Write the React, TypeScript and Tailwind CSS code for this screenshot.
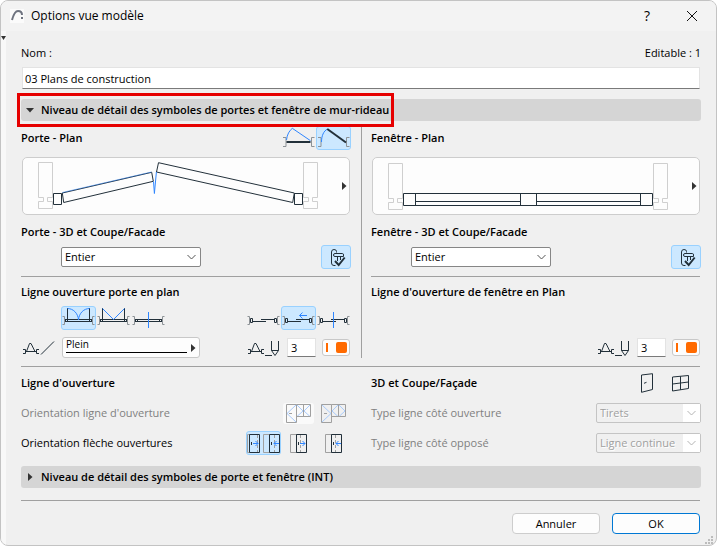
import React, { useState } from 'react';
import clsx from 'clsx';

const INK = '#22303a';
const BLUE = '#2f86ff';
const GREY = '#a0a0a0';

// ---------- drawings ----------

const Brackets = () => <path d="M.5 9.5h2v8h-2M32.5 9.5h-2v8h2" stroke="#8d9296" />;

const Icon: React.FC<{ w?: number; h?: number; children: React.ReactNode }> = ({ w = 33, h = 22, children }) => (
  <svg width={w} height={h} viewBox={`0 0 ${w} ${h}`} fill="none" stroke={INK} className="shrink-0" aria-hidden="true">
    {children}
  </svg>
);

const DoorClosed = () => (
  <Icon>
    <path d="M1 10.5h3v9H1M32.5 10.5h-3v9h3" stroke="#8d9296" />
    <path d="M4.5 13C5 7.5 7.5 3.5 10.3 1.3L28.5 13.7" stroke={BLUE} />
    <path d="M4.5 15h24" strokeWidth="2" />
  </Icon>
);

const DoorOpen = () => (
  <Icon>
    <path d="M1 10.5h3v9H1M32.5 10.5h-3v9h3" stroke="#8d9296" />
    <path d="M4.5 15C4.5 9 6.5 4 10.5 2" stroke={BLUE} />
    <path d="M10.3 2L29 15.5" strokeWidth="2" />
  </Icon>
);

const Handle = () => (
  <Icon w={28}>
    <path d="M14.5 6.5V5.5Q14.5 3.5 12 3.5T9.5 6V17Q9.5 19.5 12 19.5H13.5" />
    <path d="M13 7.5H20.5Q21.5 7.5 21.5 9V10.5H13Q11.5 10.5 11.5 9T13 7.5M15.5 10.5V15M18.5 10.5V14" />
    <path d="M13 15L16.7 19L22.7 11.5" strokeWidth="2" />
  </Icon>
);

const Rail = () => <path d="M3 12.5H30M3 14.5H30M5.5 12.5v2M27.5 12.5v2M3.5 12v3M29.5 12v3" />;

const SwingArc = () => (
  <Icon>
    <Brackets />
    <Rail />
    <path d="M5.5 1V13M27.5 1V13" />
    <path d="M5.5 1.5C11 1.5 16 6 16.5 13C17 6 22 1.5 27.5 1.5" stroke={BLUE} />
  </Icon>
);

const SwingLine = () => (
  <Icon>
    <Brackets />
    <Rail />
    <path d="M5.5 1V13M27.5 1V13" />
    <path d="M5.5 1.5L16.5 12.5L27.5 1.5" stroke={BLUE} />
  </Icon>
);

const SwingCross = () => (
  <Icon>
    <Brackets />
    <Rail />
    <path d="M16.5 5V21" stroke={BLUE} />
  </Icon>
);

const Slider: React.FC<{ mark?: string }> = ({ mark }) => (
  <Icon>
    <Brackets />
    <path d="M3.5 11.5h2v4h-2zM27.5 11.5h2v4h-2zM5.5 14.5H19M14 12.5H27.5" />
    {mark && <path d={mark} stroke={BLUE} />}
  </Icon>
);

const OpeningMark = () => (
  <path d="M0 10.5H2.5V14.5H0M2.5 12.5H13.5M16 10.5H13.5V14.5H16M3.5 12.5L6.5 4.5H8L12 12.5" />
);

const LineTypeIcon = () => (
  <Icon w={32} h={18}>
    <OpeningMark />
    <path d="M18 15.5L31 2.5" />
  </Icon>
);

const PenIcon = () => (
  <Icon w={32} h={18}>
    <OpeningMark />
    <path d="M17 16.5H24M23.5 2V11.5L27 16.5L30.5 11.5V2M23.5 11.5H30.5" />
  </Icon>
);

const SashIcon: React.FC<{ flip?: boolean }> = ({ flip }) => (
  <Icon w={25} h={19}>
    <path
      d={
        flip
          ? 'M1 1L10 9.5L1 18M17 1L11 7L17 12.5M18 1L24 7L18 12.5'
          : 'M10 1L1 9.5L10 18M11 1L17 7L11 12.5M24 1L18 7L24 12.5'
      }
      stroke="#a9cbfb"
    />
    <path d="M.5.5h10v18H.5zM10.5.5h14v12h-14M17.5.5v12M3 9.5h3" stroke={GREY} />
  </Icon>
);

const Leaf: React.FC<{ x: number; left?: boolean; dash: number }> = ({ x, left, dash }) => (
  <g transform={`translate(${x} 0)`}>
    <path d={`M${dash}.5 1V18`} stroke={GREY} strokeDasharray="3 2" />
    <path d="M.5.5h10v18H.5z" />
    <path d="M2.5 8v3" />
    <path d={left ? 'M10 9.5H5M7.5 7L5 9.5L7.5 12' : 'M4 9.5H9M6.5 7L9 9.5L6.5 12'} stroke={BLUE} />
  </g>
);

const ArrowBoth = () => (
  <Icon w={33} h={19}>
    <path d="M2.5.5H.5v18h2M22.5.5h-6v18h6" stroke={GREY} />
    <Leaf x={2} dash={8} />
    <Leaf x={22} dash={5} left />
  </Icon>
);

const ArrowSingle: React.FC<{ left?: boolean }> = ({ left }) => (
  <Icon w={17} h={19}>
    <path d="M7 .5H.5v18H7" stroke={GREY} />
    <Leaf x={6} dash={4} left={left} />
  </Icon>
);

const Walls = () => (
  <path
    d="M.5.5h14v35h-5v4h5v7H.5v-7h5v-4h-5zM265.5.5h14v35h-5v4h5v7h-14v-7h5v-4h-5z"
    stroke="#cfcfcf"
  />
);

const DoorPlan = () => (
  <Icon w={280} h={48}>
    <Walls />
    <path d="M15.5 31.5h8v11h-8zM256.5 31.5h8v11h-8z" />
    <path d="M24.3 31L113.7 10.3L115.3 19.3L25.7 40.5zM120.5.7L118.5 10L254.7 40.5L256.3 31z" />
    <path d="M24.3 30.5L113.5 10" stroke={BLUE} strokeWidth=".5" />
    <path d="M115.5 19.5L116.4 31.5L118.4 10" stroke={BLUE} />
  </Icon>
);

const WindowPlan = () => (
  <Icon w={280} h={48}>
    <g transform="translate(0 1)">
      <Walls />
    </g>
    <path d="M15.5 31.5h249v12h-249zM27.5 31.5v12M132.5 31.5v12M148.5 31.5v12M252.5 31.5v12M27.5 39.5h105M148.5 39.5h104" />
  </Icon>
);

const Triangle: React.FC<{ down?: boolean }> = ({ down }) => (
  <svg width="8" height="8" viewBox="0 0 8 8" fill="#333" className="shrink-0" aria-hidden="true">
    <path d={down ? 'M0 2h8L4 6.5z' : 'M2 0v8L6.5 4z'} />
  </svg>
);

// ---------- controls ----------

const Toggle: React.FC<{ label: string; on?: boolean; onClick?: () => void; wide?: boolean; children: React.ReactNode }> = ({
  label,
  on = false,
  onClick,
  wide = true,
  children,
}) => (
  <button
    type="button"
    aria-label={label}
    aria-pressed={on}
    onClick={onClick}
    className={clsx(
      'flex h-6 shrink-0 items-center justify-center rounded-[3px] border',
      wide ? 'w-[35px]' : 'w-[30px]',
      on ? 'border-[#99d1ff] bg-[#cce8ff]' : 'border-transparent',
    )}
  >
    {children}
  </button>
);

const ToggleGroup: React.FC<{ items: [string, React.ReactNode][]; initial: number }> = ({ items, initial }) => {
  const [active, setActive] = useState(initial);
  return (
    <div className="flex">
      {items.map(([label, icon], i) => (
        <Toggle key={label} label={label} on={i === active} onClick={() => setActive(i)}>
          {icon}
        </Toggle>
      ))}
    </div>
  );
};

const Select: React.FC<{ id?: string; label?: string; options: string[]; disabled?: boolean; className: string }> = ({
  id,
  label,
  options,
  disabled,
  className,
}) => (
  <div className={clsx('relative h-5', className)}>
    <select
      id={id}
      aria-label={label}
      disabled={disabled}
      className={clsx(
        'block h-full w-full appearance-none rounded-[2px] border pl-[3px] text-[11px] leading-4 opacity-100',
        disabled
          ? 'border-[#c4c4c4] bg-[#f0f0f0] text-[#a0a0a0] [text-shadow:1px_1px_0_#fff]'
          : 'border-[#868686] bg-white text-black',
      )}
    >
      {options.map((o) => (
        <option key={o}>{o}</option>
      ))}
    </select>
    <span
      className={clsx(
        'pointer-events-none absolute inset-y-px right-px flex w-[17px] items-center justify-center',
        disabled ? 'bg-white text-[#b4b4b4]' : 'text-[#555]',
      )}
    >
      <svg width="9" height="6" viewBox="0 0 9 6" fill="none" stroke="currentColor" aria-hidden="true">
        <path d="M.5 1l4 4l4-4" />
      </svg>
    </span>
  </div>
);

const PenField: React.FC<{ label: string }> = ({ label }) => {
  const [pen, setPen] = useState('3');
  return (
    <div className="flex items-center">
      <PenIcon />
      <input
        aria-label={label}
        value={pen}
        onChange={(e) => setPen(e.target.value)}
        className="ml-[7px] h-[19px] w-[29px] border border-[#e3e3e3] border-b-[#7a7a7a] bg-white pl-[3px] text-[11px]"
      />
      <button
        type="button"
        aria-label="Couleur du stylo"
        className="ml-1.5 flex h-[17px] w-[28px] items-center justify-between rounded-[3px] border border-[#c8c8c8] bg-[#fdfdfd] pr-0.5 pl-[3px]"
      >
        <span className="h-[9px] w-0.5 bg-[#ff6a00]" />
        <span className="size-[11px] rounded-[2px] bg-[#ff6a00]" />
      </button>
    </div>
  );
};

const Preview: React.FC<{ label: string; children: React.ReactNode }> = ({ label, children }) => (
  <button
    type="button"
    aria-label={label}
    className="mx-px mt-[7px] flex h-[58px] items-center justify-between rounded-[5px] border border-[#cdcdcd] bg-[#fdfdfd] pr-px pl-[15px]"
  >
    {children}
    <Triangle />
  </button>
);

const SectionHeader: React.FC<{ title: string; open?: boolean }> = ({ title, open = false }) => (
  <button
    type="button"
    aria-expanded={open}
    className="flex h-[22px] w-full items-center gap-[7px] rounded-[3px] bg-[#d5d5d5] pl-[5px] text-left font-semibold"
  >
    <Triangle down={open} />
    {title}
  </button>
);

const Rule = ({ className }: { className?: string }) => <hr className={clsx('border-t border-[#a0a0a0]', className)} />;

const Heading: React.FC<{ children: React.ReactNode }> = ({ children }) => (
  <h2 className="leading-4 font-semibold whitespace-nowrap">{children}</h2>
);

export default function App() {
  const [name, setName] = useState('03 Plans de construction');

  return (
    <div className="flex min-h-screen flex-col overflow-hidden rounded-lg border border-[#c3c3c3] bg-[#f0f0f0] font-['Open_Sans','Noto_Sans',sans-serif] text-[11px] leading-4 text-black">
      <header className="flex h-[30px] shrink-0 items-center bg-[#f3f3f3] pr-4 pl-[9px]">
        <svg width="14" height="14" viewBox="0 0 14 14" fill="none" aria-hidden="true">
          <rect width="14" height="14" fill="#fbfbfb" />
          <path d="M2 11C3.5 5.5 5 2 8 2Q12 2 12 6" stroke="#6f7480" strokeWidth="2" />
          <path d="M12 8v2" stroke="#6f7480" strokeWidth="2" />
        </svg>
        <h1 className="ml-[7px] text-xs">Options vue modèle</h1>
        <button type="button" aria-label="Aide" className="ml-auto w-4 text-sm">
          ?
        </button>
        <button type="button" aria-label="Fermer" className="ml-[29px] flex w-4 justify-center">
          <svg width="12" height="12" viewBox="0 0 12 12" fill="none" stroke="#111" aria-hidden="true">
            <path d="M1 1l10 10M11 1L1 11" />
          </svg>
        </button>
      </header>

      <div className="flex flex-1">
        <div className="w-[5px] shrink-0 bg-[#f8f8f8] pt-[5px]">
          <svg width="5" height="4" viewBox="0 0 5 4" fill="#333" aria-hidden="true">
            <path d="M0 0h5L2.5 4z" />
          </svg>
        </div>

        <main className="flex min-w-0 flex-1 flex-col pt-3.5 pr-[15px] pb-[11px] pl-[15px]">
          <div className="flex h-4 items-center justify-between">
            <label htmlFor="nom">Nom :</label>
            <span>Editable : 1</span>
          </div>
          <input
            id="nom"
            value={name}
            onChange={(e) => setName(e.target.value)}
            className="mx-px mt-1.5 h-[22px] border border-[#e3e3e3] border-b-[#7a7a7a] bg-white pl-0.5 text-[11px]"
          />

          <div className="relative mt-2.5">
            <SectionHeader title="Niveau de détail des symboles de portes et fenêtre de mur-rideau" open />
            <div className="pointer-events-none absolute -inset-y-1.5 -left-1 w-[377px] border-[3px] border-[#e60000]" />
          </div>

          <div className="mt-[5px] grid grid-cols-[1fr_20px_1fr]">
            <section className="flex min-w-0 flex-col">
              <div className="flex h-6 items-center justify-between">
                <Heading>Porte - Plan</Heading>
                <ToggleGroup
                  initial={1}
                  items={[
                    ['Porte fermée', <DoorClosed />],
                    ['Porte ouverte', <DoorOpen />],
                  ]}
                />
              </div>
              <Preview label="Porte - Plan">
                <DoorPlan />
              </Preview>
              <div className="mt-[9px]">
                <Heading>Porte - 3D et Coupe/Facade</Heading>
              </div>
              <div className="mt-[5px] flex h-6 items-center justify-between pl-10">
                <Select label="Porte - 3D et Coupe/Facade" options={['Entier']} className="w-[140px]" />
                <Toggle label="Poignée de porte" on wide={false}>
                  <Handle />
                </Toggle>
              </div>
              <Rule className="mt-[7px] mr-px" />
              <div className="mt-[7px]">
                <Heading>Ligne ouverture porte en plan</Heading>
              </div>
              <div className="mt-1.5 flex h-6 justify-between pl-10">
                <ToggleGroup
                  initial={0}
                  items={[
                    ['Arc', <SwingArc />],
                    ['Ligne', <SwingLine />],
                    ['Croix', <SwingCross />],
                  ]}
                />
                <ToggleGroup
                  initial={1}
                  items={[
                    ['Coulissant', <Slider />],
                    ['Coulissant avec flèche', <Slider mark="M25 8.5H17.5M20.5 5.5L17.5 8.5L20.5 11.5" />],
                    ['Coulissant avec croix', <Slider mark="M16.5 5V21" />],
                  ]}
                />
              </div>
              <div className="mt-[7px] flex h-[21px] items-center pr-px pl-0.5">
                <LineTypeIcon />
                <button
                  type="button"
                  className="ml-[7px] flex h-[21px] w-[138px] items-center gap-0.5 rounded-[3px] border border-[#c8c8c8] bg-[#fdfdfd] pr-0.5 pl-[3px] text-left"
                >
                  <span className="h-[10px] flex-1 border-b border-black text-[10px] leading-[3px]">Plein</span>
                  <Triangle />
                </button>
                <div className="ml-auto">
                  <PenField label="Stylo porte" />
                </div>
              </div>
            </section>

            <div className="ml-2.5 border-l border-[#a0a0a0]" />

            <section className="flex min-w-0 flex-col">
              <div className="flex h-6 items-center">
                <Heading>Fenêtre - Plan</Heading>
              </div>
              <Preview label="Fenêtre - Plan">
                <WindowPlan />
              </Preview>
              <div className="mt-[9px]">
                <Heading>Fenêtre - 3D et Coupe/Facade</Heading>
              </div>
              <div className="mt-[5px] flex h-6 items-center justify-between pl-10">
                <Select label="Fenêtre - 3D et Coupe/Facade" options={['Entier']} className="w-[140px]" />
                <Toggle label="Poignée de fenêtre" on wide={false}>
                  <Handle />
                </Toggle>
              </div>
              <Rule className="mt-[7px] mr-px" />
              <div className="mt-[7px]">
                <Heading>Ligne d'ouverture de fenêtre en Plan</Heading>
              </div>
              <div className="mt-auto flex h-[21px] items-center justify-end pr-px">
                <PenField label="Stylo fenêtre" />
              </div>
            </section>
          </div>

          <Rule className="mt-2 mr-px" />

          <div className="mt-1.5 grid grid-cols-2 gap-x-5">
            <section>
              <div className="flex h-5 items-center">
                <Heading>Ligne d'ouverture</Heading>
              </div>
              <div className="mt-2 flex h-6 items-center justify-between text-[#808080]">
                <span>Orientation ligne d'ouverture</span>
                <div className="flex items-center">
                  <button
                    type="button"
                    disabled
                    aria-label="Vers l'intérieur"
                    className="mx-0.5 flex h-[21px] w-[31px] items-center justify-center rounded-[3px] bg-[#fafafa]"
                  >
                    <SashIcon />
                  </button>
                  <button
                    type="button"
                    disabled
                    aria-label="Vers l'extérieur"
                    className="mx-0.5 flex h-[21px] w-[31px] items-center justify-center"
                  >
                    <SashIcon flip />
                  </button>
                </div>
              </div>
              <div className="mt-1.5 flex h-6 items-center justify-between">
                <span>Orientation flèche ouvertures</span>
                <ToggleGroup
                  initial={0}
                  items={[
                    ['Les deux', <ArrowBoth />],
                    ['Droite', <ArrowSingle />],
                    ['Gauche', <ArrowSingle left />],
                  ]}
                />
              </div>
            </section>

            <section>
              <div className="flex h-5 items-center justify-between">
                <Heading>3D et Coupe/Façade</Heading>
                <div className="flex items-center gap-[19px] pr-3">
                  <button type="button" aria-label="Porte en 3D">
                    <Icon w={12} h={20}>
                      <path d="M.5 2L11.5.7V16.5L.5 19.3zM3 10.3L5.5 9.3" />
                    </Icon>
                  </button>
                  <button type="button" aria-label="Fenêtre en 3D">
                    <Icon w={17} h={18}>
                      <path d="M.5 3L16.5 1.5V14.5L.5 17zM8.5 2.3V15.8M.5 10L16.5 8" />
                    </Icon>
                  </button>
                </div>
              </div>
              <div className="mt-2 flex h-6 items-center justify-between text-[#808080]">
                <label htmlFor="ligne-ouverture">Type ligne côté ouverture</label>
                <Select id="ligne-ouverture" options={['Tirets']} disabled className="w-[105px]" />
              </div>
              <div className="mt-1.5 flex h-6 items-center justify-between text-[#808080]">
                <label htmlFor="ligne-oppose">Type ligne côté opposé</label>
                <Select id="ligne-oppose" options={['Ligne continue']} disabled className="w-[105px]" />
              </div>
            </section>
          </div>

          <div className="mt-[11px]">
            <SectionHeader title="Niveau de détail des symboles de porte et fenêtre (INT)" />
          </div>

          <Rule className="mt-3 mr-px" />

          <div className="relative mt-3 flex justify-end gap-3 pr-px">
            <button type="button" className="h-[21px] w-[88px] rounded-[4px] border border-[#cdcdcd] bg-[#fdfdfd]">
              Annuler
            </button>
            <button type="button" className="h-[21px] w-[88px] rounded-[4px] border border-[#0078d4] bg-[#fdfdfd]">
              OK
            </button>
            <svg
              width="8"
              height="8"
              viewBox="0 0 8 8"
              fill="#bcbcbc"
              className="absolute -right-3 -bottom-2.5"
              aria-hidden="true"
            >
              <path d="M6 0h2v2H6zM3 3h2v2H3zM6 3h2v2H6zM0 6h2v2H0zM3 6h2v2H3zM6 6h2v2H6z" />
            </svg>
          </div>
        </main>
      </div>
    </div>
  );
}
